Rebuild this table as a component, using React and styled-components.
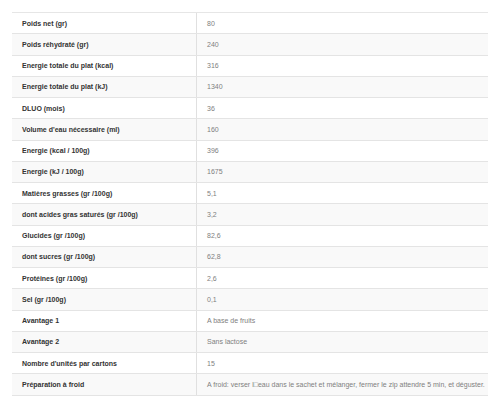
import React from 'react'
import styled, { createGlobalStyle } from 'styled-components'

const rows = [
  ['Poids net (gr)', '80'],
  ['Poids réhydraté (gr)', '240'],
  ['Energie totale du plat (kcal)', '316'],
  ['Energie totale du plat (kJ)', '1340'],
  ['DLUO (mois)', '36'],
  ["Volume d'eau nécessaire (ml)", '160'],
  ['Energie (kcal / 100g)', '396'],
  ['Energie (kJ / 100g)', '1675'],
  ['Matières grasses (gr /100g)', '5,1'],
  ['dont acides gras saturés (gr /100g)', '3,2'],
  ['Glucides (gr /100g)', '82,6'],
  ['dont sucres (gr /100g)', '62,8'],
  ['Protéines (gr /100g)', '2,6'],
  ['Sel (gr /100g)', '0,1'],
  ['Avantage 1', 'A base de fruits'],
  ['Avantage 2', 'Sans lactose'],
  ["Nombre d'unités par cartons", '15'],
  ['Préparation à froid', 'A froid: verser l\u25A1eau dans le sachet et mélanger, fermer le zip attendre 5 min, et déguster.'],
]

const Global = createGlobalStyle`
  html, body {
    margin: 0;
    background: #fff;
  }
  body {
    font-family: "Liberation Sans", Arial, sans-serif;
  }
`

export default function App() {
  return (
    <>
      <Global />
      <Page>
        <Specs>
          {rows.map(([label, value], i) => (
            <Row key={i} $striped={i % 2 === 1}>
              <Label>{label}</Label>
              <Value>{value}</Value>
            </Row>
          ))}
        </Specs>
      </Page>
    </>
  )
}

const Page = styled.div`
  padding: 12px 13px 0 12px;
  width: 501px;
  height: 408px;
  box-sizing: border-box;
`

const Specs = styled.div`
  width: 476px;
  border-top: 1.5px solid #e6e6e6;
`

const Row = styled.div`
  display: grid;
  grid-template-columns: 185px 1fr;
  height: 21.25px;
  box-sizing: border-box;
  border-bottom: 1px solid #e4e4e4;
  background: ${props => props.$striped ? '#f9f9f9' : '#fff'};
`

const Cell = styled.div`
  display: flex;
  align-items: center;
  padding-left: 10px;
  font-size: 7px;
  white-space: nowrap;
`

const Label = styled(Cell)`
  font-weight: bold;
  color: #333;
  border-right: 1px solid #e0e0e0;
`

const Value = styled(Cell)`
  color: #808080;
`
